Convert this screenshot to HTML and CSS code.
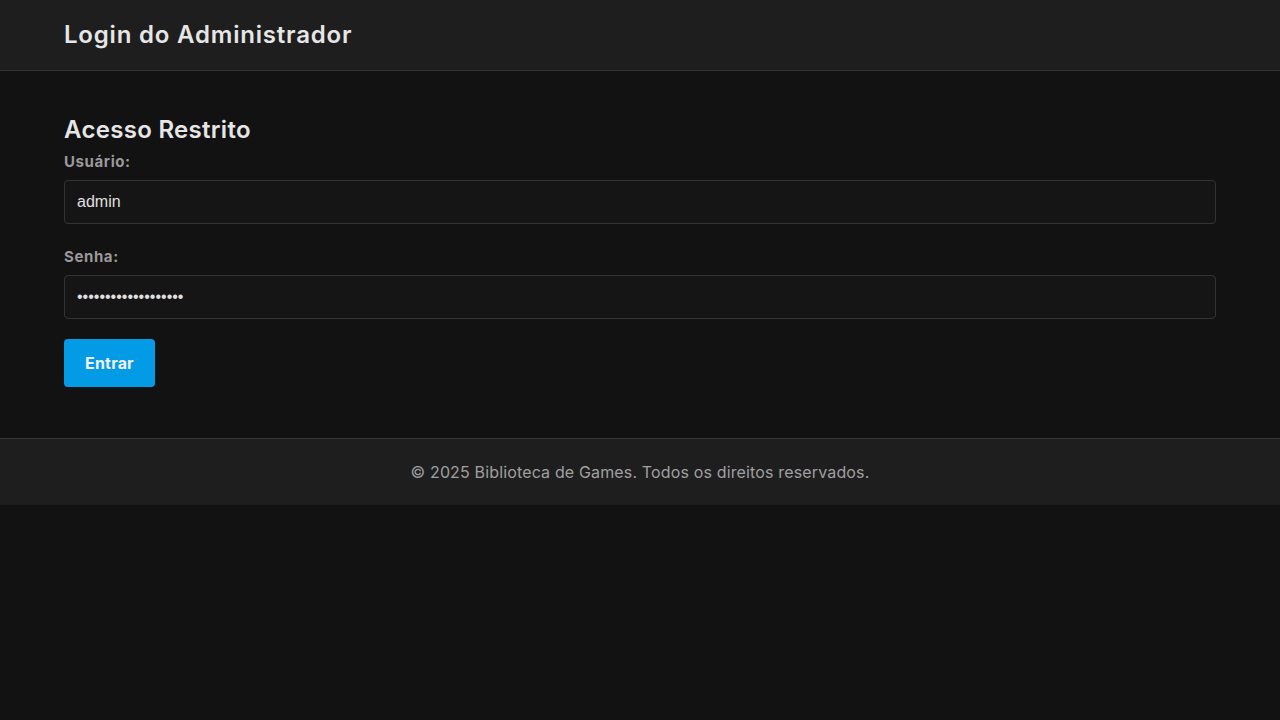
FILE: index.html
```html
<!DOCTYPE html>
<html lang="pt-BR">
<head>
<meta charset="utf-8">
<title>Login do Administrador</title>
<link rel="stylesheet" href="styles.css">
</head>
<body>
<header class="site-header">
  <div class="container">
    <h1 class="site-title">Login do Administrador</h1>
  </div>
</header>
<main class="site-main">
  <div class="container">
    <h2 class="section-title">Acesso Restrito</h2>
    <form class="login-form">
      <div class="form-group">
        <label class="form-label" for="usuario">Usuário:</label>
        <input class="form-input" id="usuario" type="text" value="admin">
      </div>
      <div class="form-group">
        <label class="form-label" for="senha">Senha:</label>
        <input class="form-input" id="senha" type="password" value="adminpassword123456">
      </div>
      <button class="btn-primary" type="button">Entrar</button>
    </form>
  </div>
</main>
<footer class="site-footer">
  <p class="footer-text">© 2025 Biblioteca de Games. Todos os direitos reservados.</p>
</footer>
</body>
</html>
```
FILE: styles.css
```css
* { box-sizing: border-box; }
html, body {
  margin: 0;
  padding: 0;
  background: #121212;
  color: #e0e0e0;
  font-family: "Inter", "Noto Sans", sans-serif;
}
.container {
  padding: 0 64px;
}
.site-header {
  background: #1e1e1e;
  border-bottom: 1px solid #333;
  padding: 20px 0;
}
.site-title {
  margin: 0;
  font-size: 24px;
  line-height: 30px;
  font-weight: 600;
  letter-spacing: 0.8px;
  color: #e6e6e6;
}
.site-main {
  padding: 44px 0 51px;
}
.section-title {
  margin: 0 0 6px;
  font-size: 24px;
  line-height: 29px;
  font-weight: 600;
  letter-spacing: 0.3px;
  color: #e6e6e6;
}
.form-group {
  margin-bottom: 21px;
}
.form-label {
  display: block;
  font-size: 15px;
  line-height: 24px;
  font-weight: 700;
  letter-spacing: 0.6px;
  color: #9a9a9a;
  margin-bottom: 6px;
}
.form-input {
  display: block;
  width: 100%;
  height: 44px;
  padding: 0 12px;
  background: #151515;
  border: 1px solid #333;
  border-radius: 4px;
  color: #e0e0e0;
  font-family: "Liberation Sans", Arial, sans-serif;
  font-size: 16px;
  outline: none;
}
.login-form .form-group:last-of-type {
  margin-bottom: 20px;
}
.btn-primary {
  display: block;
  height: 48px;
  padding: 0 21px;
  background: #039be5;
  border: none;
  border-radius: 4px;
  color: #f0f0f0;
  font-family: "Inter", "Noto Sans", sans-serif;
  font-size: 16px;
  font-weight: 700;
  letter-spacing: 0.2px;
  cursor: pointer;
}
.site-footer {
  background: #1e1e1e;
  border-top: 1px solid #333;
  padding: 21px 0;
  text-align: center;
}
.footer-text {
  margin: 0;
  font-size: 16px;
  line-height: 24px;
  letter-spacing: 0.15px;
  color: #a0a0a0;
}
```
